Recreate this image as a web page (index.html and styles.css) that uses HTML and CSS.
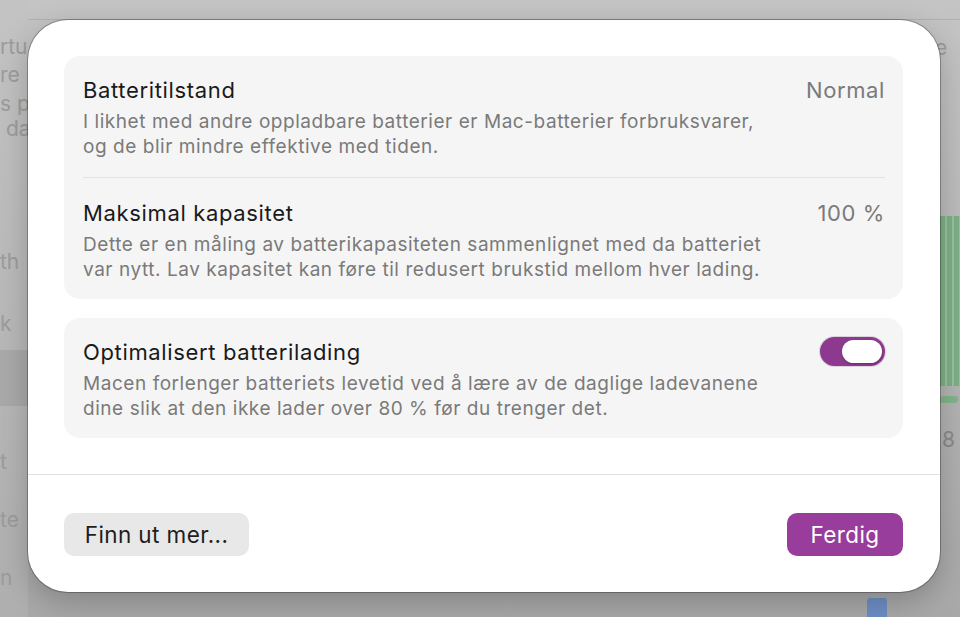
FILE: index.html
```html
<!DOCTYPE html>
<html lang="no">
<head>
<meta charset="utf-8">
<title>Batteri</title>
<link rel="stylesheet" href="styles.css">
</head>
<body>
<div class="backdrop">
  <div class="bg-sidebar">
    <span class="bg-t t1">rtu</span>
    <span class="bg-t t2">re</span>
    <span class="bg-t t3">s p</span>
    <span class="bg-t t4">da</span>
    <span class="bg-t t5">th</span>
    <span class="bg-t t6">k</span>
    <div class="bg-sel"></div>
    <span class="bg-t t7">t</span>
    <span class="bg-t t8">te</span>
    <span class="bg-t t9">n</span>
  </div>
  <div class="bg-topline"></div>
  <span class="bg-t r1">ge</span>
  <div class="bg-bars"></div>
  <div class="bg-bar-low"></div>
  <span class="bg-t r2">8</span>
  <div class="bg-blue"></div>
</div>

<div class="dialog">
  <div class="content">
    <section class="group">
      <div class="row">
        <div class="text">
          <div class="title">Batteritilstand</div>
          <div class="desc">I likhet med andre oppladbare batterier er Mac-batterier forbruksvarer,<br>og de blir mindre effektive med tiden.</div>
        </div>
        <div class="value">Normal</div>
      </div>
      <div class="sep"></div>
      <div class="row">
        <div class="text">
          <div class="title">Maksimal kapasitet</div>
          <div class="desc">Dette er en måling av batterikapasiteten sammenlignet med da batteriet<br>var nytt. Lav kapasitet kan føre til redusert brukstid mellom hver lading.</div>
        </div>
        <div class="value">100 %</div>
      </div>
    </section>
    <section class="group">
      <div class="row">
        <div class="text">
          <div class="title">Optimalisert batterilading</div>
          <div class="desc">Macen forlenger batteriets levetid ved å lære av de daglige ladevanene<br>dine slik at den ikke lader over 80 % før du trenger det.</div>
        </div>
        <div class="toggle"><div class="knob"></div></div>
      </div>
    </section>
  </div>
  <div class="footer">
    <button class="btn secondary">Finn ut mer...</button>
    <button class="btn primary">Ferdig</button>
  </div>
</div>
</body>
</html>
```

FILE: styles.css
```css
* { box-sizing: border-box; }
html, body { margin: 0; height: 100%; }
body {
  width: 960px;
  height: 617px;
  overflow: hidden;
  position: relative;
  background: linear-gradient(#c4c4c4, #bababa 40%, #a8a8a8);
  font-family: Inter, "Noto Sans", "Liberation Sans", sans-serif;
  padding: 20px 0 0 28px;
}

/* backdrop (blurred window behind the sheet) */
.backdrop { position: absolute; inset: 0; }
.bg-topline { position: absolute; left: 28px; right: 0; top: 19px; height: 1px; background: #b0b0b0; }
.bg-sidebar {
  position: absolute; left: 0; top: 0; width: 28px; height: 617px;
  background: linear-gradient(#c2c3c2, #b8b9b8 50%, #aeafae);
}
.bg-sel { position: absolute; left: 0; top: 350px; width: 28px; height: 56px; background: #a8a9a8; }
.bg-t {
  position: absolute;
  color: #9c9c9c;
  font-size: 21px;
  line-height: 24px;
  white-space: nowrap;
}
.t1 { left: 0; top: 35px; }
.t2 { left: 0; top: 63px; }
.t3 { left: 0; top: 92px; }
.t4 { left: 6px; top: 117px; }
.t5 { left: 0; top: 250px; }
.t6 { left: 0; top: 312px; }
.t7 { left: 0; top: 450px; }
.t8 { left: 0; top: 508px; }
.t9 { left: 0; top: 566px; }
.r1 { left: 922px; top: 36px; }
.r2 { left: 942px; top: 428px; color: #8a8a8a; }
.bg-bars {
  position: absolute; left: 940px; top: 216px; width: 20px; height: 170px;
  background: repeating-linear-gradient(90deg, #7fae86 0 5px, #98c39d 5px 7px);
}
.bg-bar-low { position: absolute; left: 940px; top: 396px; width: 18px; height: 7px; background: #82b48a; border-radius: 3px; }
.bg-blue { position: absolute; left: 867px; top: 598px; width: 20px; height: 20px; background: #6d8fc5; border-radius: 3px 3px 0 0; }

/* sheet */
.dialog {
  position: relative;
  width: 912px;
  height: 572px;
  background: #fff;
  border-radius: 40px;
  box-shadow: 0 0 0 1px rgba(0,0,0,0.28), 0 10px 30px rgba(0,0,0,0.22);
  display: flex;
  flex-direction: column;
  overflow: hidden;
}
.content {
  padding: 36px 37px 0 36px;
  display: flex;
  flex-direction: column;
  gap: 19px;
  height: 455px;
  border-bottom: 1px solid #e2e2e2;
}
.group {
  background: #f5f5f5;
  border-radius: 16px;
  padding: 0 18px 0 19px;
}
.row {
  display: flex;
  justify-content: space-between;
  align-items: flex-start;
  padding: 20px 0 17px;
}
.sep { height: 1px; margin: 1px 0; background: #e3e3e3; }
.title {
  font-size: 22px;
  color: #1a1a1a;
  line-height: 28px;
  letter-spacing: 0.65px;
}
.desc {
  margin-top: 5px;
  font-size: 19px;
  line-height: 25px;
  color: #7a7a7a;
  letter-spacing: 0.55px;
}
.value {
  font-size: 22px;
  line-height: 28px;
  color: #7a7a7a;
  letter-spacing: 0.6px;
}
.toggle {
  width: 65px;
  height: 29px;
  border-radius: 15px;
  background: #8d3990;
  padding: 3px;
  display: flex;
  justify-content: flex-end;
  margin-top: -1px;
  box-shadow: 0 0 0 1px rgba(80,20,80,0.15);
}
.knob {
  width: 40px;
  height: 23px;
  border-radius: 12px;
  background: #fff;
  box-shadow: 0 1px 2px rgba(0,0,0,0.25);
}
.footer {
  flex: 1;
  display: flex;
  justify-content: space-between;
  align-items: flex-start;
  padding: 38px 37px 0 36px;
}
.btn {
  font-family: inherit;
  font-size: 22.5px;
  height: 43px;
  border: none;
  border-radius: 10px;
  padding: 0;
  letter-spacing: 0.4px;
}
.btn.secondary {
  width: 185px;
  background: #e8e8e8;
  color: #1e1e1e;
}
.btn.primary {
  width: 116px;
  background: #983d9b;
  color: #fff;
}
```
